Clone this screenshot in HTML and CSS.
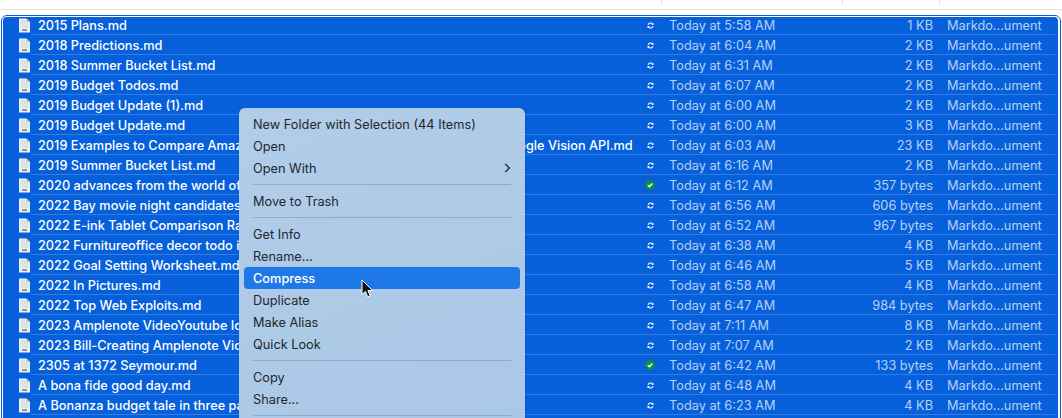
FILE: index.html
```html
<!DOCTYPE html>
<html lang="en">
<head>
    <meta charset="UTF-8">
    <meta name="viewport" content="width=device-width, initial-scale=1.0">
    <title>Finder selection</title>
    <link rel="stylesheet" href="styles.css">
</head>
<body>
    <svg class="defs" width="0" height="0">
        <symbol id="doc" viewBox="0 0 11 15">
            <path d="M0 0.5H7.4L11 4.1V14.5H0Z" fill="#eef0f2"/>
            <path d="M7.4 0.5L11 4.1H7.4Z" fill="#bfc3c9"/>
            <path d="M1.6 3H6M1.6 5H9.4M1.6 7H9.4M1.6 9H9.4" stroke="#cdd0d5" stroke-width="0.9"/>
            <rect x="3" y="11.2" width="5" height="1.8" fill="#868b93"/>
        </symbol>
        <symbol id="sync" viewBox="0 0 8 8">
            <path d="M1.2 3.4A2.9 2.9 0 0 1 6.4 2.4M6.8 4.6A2.9 2.9 0 0 1 1.6 5.6" fill="none" stroke="#fff" stroke-width="1.3"/>
            <path d="M7.4 0.9V3.4H4.9ZM0.6 7.1V4.6H3.1Z" fill="#fff"/>
        </symbol>
        <symbol id="done" viewBox="0 0 11 11">
            <circle cx="5.5" cy="5.5" r="5.5" fill="#0e8a4b"/>
            <path d="M3 5.8L4.8 7.4L8 3.9" fill="none" stroke="#fff" stroke-width="1.5"/>
        </symbol>
    </svg>

    <div class="header">
        <span class="tick tick-date"></span>
        <span class="tick tick-size"></span>
        <span class="tick tick-kind"></span>
    </div>

    <div class="frame">
        <div class="list">
            <div class="row"><svg class="doc"><use href="#doc"/></svg><span class="name">2015 Plans.md</span><svg class="sync"><use href="#sync"/></svg><span class="date">Today at 5:58 AM</span><span class="size">1 KB</span><span class="kind">Markdo...ument</span></div>
            <div class="row"><svg class="doc"><use href="#doc"/></svg><span class="name">2018 Predictions.md</span><svg class="sync"><use href="#sync"/></svg><span class="date">Today at 6:04 AM</span><span class="size">2 KB</span><span class="kind">Markdo...ument</span></div>
            <div class="row"><svg class="doc"><use href="#doc"/></svg><span class="name">2018 Summer Bucket List.md</span><svg class="sync"><use href="#sync"/></svg><span class="date">Today at 6:31 AM</span><span class="size">2 KB</span><span class="kind">Markdo...ument</span></div>
            <div class="row"><svg class="doc"><use href="#doc"/></svg><span class="name">2019 Budget Todos.md</span><svg class="sync"><use href="#sync"/></svg><span class="date">Today at 6:07 AM</span><span class="size">2 KB</span><span class="kind">Markdo...ument</span></div>
            <div class="row"><svg class="doc"><use href="#doc"/></svg><span class="name">2019 Budget Update (1).md</span><svg class="sync"><use href="#sync"/></svg><span class="date">Today at 6:00 AM</span><span class="size">2 KB</span><span class="kind">Markdo...ument</span></div>
            <div class="row"><svg class="doc"><use href="#doc"/></svg><span class="name">2019 Budget Update.md</span><svg class="sync"><use href="#sync"/></svg><span class="date">Today at 6:00 AM</span><span class="size">3 KB</span><span class="kind">Markdo...ument</span></div>
            <div class="row"><svg class="doc"><use href="#doc"/></svg><span class="name">2019 Examples to Compare Amazon Rekognition, Microsoft Azure, Bing and Google Vision API.md</span><svg class="sync"><use href="#sync"/></svg><span class="date">Today at 6:03 AM</span><span class="size">23 KB</span><span class="kind">Markdo...ument</span></div>
            <div class="row"><svg class="doc"><use href="#doc"/></svg><span class="name">2019 Summer Bucket List.md</span><svg class="sync"><use href="#sync"/></svg><span class="date">Today at 6:16 AM</span><span class="size">2 KB</span><span class="kind">Markdo...ument</span></div>
            <div class="row"><svg class="doc"><use href="#doc"/></svg><span class="name">2020 advances from the world of technology.md</span><svg class="done"><use href="#done"/></svg><span class="date">Today at 6:12 AM</span><span class="size">357 bytes</span><span class="kind">Markdo...ument</span></div>
            <div class="row"><svg class="doc"><use href="#doc"/></svg><span class="name">2022 Bay movie night candidates list.md</span><svg class="sync"><use href="#sync"/></svg><span class="date">Today at 6:56 AM</span><span class="size">606 bytes</span><span class="kind">Markdo...ument</span></div>
            <div class="row"><svg class="doc"><use href="#doc"/></svg><span class="name">2022 E-ink Tablet Comparison Ratings.md</span><svg class="sync"><use href="#sync"/></svg><span class="date">Today at 6:52 AM</span><span class="size">967 bytes</span><span class="kind">Markdo...ument</span></div>
            <div class="row"><svg class="doc"><use href="#doc"/></svg><span class="name">2022 Furnitureoffice decor todo ideas.md</span><svg class="sync"><use href="#sync"/></svg><span class="date">Today at 6:38 AM</span><span class="size">4 KB</span><span class="kind">Markdo...ument</span></div>
            <div class="row"><svg class="doc"><use href="#doc"/></svg><span class="name">2022 Goal Setting Worksheet.md</span><svg class="sync"><use href="#sync"/></svg><span class="date">Today at 6:46 AM</span><span class="size">5 KB</span><span class="kind">Markdo...ument</span></div>
            <div class="row"><svg class="doc"><use href="#doc"/></svg><span class="name">2022 In Pictures.md</span><svg class="sync"><use href="#sync"/></svg><span class="date">Today at 6:58 AM</span><span class="size">4 KB</span><span class="kind">Markdo...ument</span></div>
            <div class="row"><svg class="doc"><use href="#doc"/></svg><span class="name">2022 Top Web Exploits.md</span><svg class="sync"><use href="#sync"/></svg><span class="date">Today at 6:47 AM</span><span class="size">984 bytes</span><span class="kind">Markdo...ument</span></div>
            <div class="row"><svg class="doc"><use href="#doc"/></svg><span class="name">2023 Amplenote VideoYoutube Ideas list.md</span><svg class="sync"><use href="#sync"/></svg><span class="date">Today at 7:11 AM</span><span class="size">8 KB</span><span class="kind">Markdo...ument</span></div>
            <div class="row"><svg class="doc"><use href="#doc"/></svg><span class="name">2023 Bill-Creating Amplenote Videos plan.md</span><svg class="sync"><use href="#sync"/></svg><span class="date">Today at 7:07 AM</span><span class="size">2 KB</span><span class="kind">Markdo...ument</span></div>
            <div class="row"><svg class="doc"><use href="#doc"/></svg><span class="name">2305 at 1372 Seymour.md</span><svg class="done"><use href="#done"/></svg><span class="date">Today at 6:42 AM</span><span class="size">133 bytes</span><span class="kind">Markdo...ument</span></div>
            <div class="row"><svg class="doc"><use href="#doc"/></svg><span class="name">A bona fide good day.md</span><svg class="sync"><use href="#sync"/></svg><span class="date">Today at 6:48 AM</span><span class="size">4 KB</span><span class="kind">Markdo...ument</span></div>
            <div class="row"><svg class="doc"><use href="#doc"/></svg><span class="name">A Bonanza budget tale in three parts.md</span><svg class="sync"><use href="#sync"/></svg><span class="date">Today at 6:23 AM</span><span class="size">4 KB</span><span class="kind">Markdo...ument</span></div>
        </div>
    </div>

    <div class="menu">
        <div class="menu-item">New Folder with Selection (44 Items)</div>
        <div class="menu-item">Open</div>
        <div class="menu-item">Open With
            <svg class="chevron" viewBox="0 0 7 10"><path d="M1.2 1L5.4 5L1.2 9" fill="none" stroke="#2b3238" stroke-width="1.5"/></svg>
        </div>
        <div class="menu-sep"></div>
        <div class="menu-item">Move to Trash</div>
        <div class="menu-sep"></div>
        <div class="menu-item">Get Info</div>
        <div class="menu-item">Rename...</div>
        <div class="menu-item active">Compress</div>
        <div class="menu-item">Duplicate</div>
        <div class="menu-item">Make Alias</div>
        <div class="menu-item">Quick Look</div>
        <div class="menu-sep"></div>
        <div class="menu-item">Copy</div>
        <div class="menu-item">Share...</div>
        <div class="menu-sep"></div>
    </div>

    <svg class="cursor" viewBox="0 0 13 19">
        <path d="M1 1V15.5L4.4 12.4L6.7 17.8L9.2 16.7L6.9 11.5H11.5Z" fill="#111" stroke="#fff" stroke-width="1"/>
    </svg>
</body>
</html>
```

FILE: styles.css
```css
html, body {
    margin: 0;
    height: 418px;
    overflow: hidden;
    background: #fff;
}
body {
    font-family: Inter, "Liberation Sans", sans-serif;
    font-size: 12.75px;
    position: relative;
}
.defs {
    position: absolute;
}
.header {
    display: flex;
    height: 9px;
    border-bottom: 1px solid #e3e3e3;
    margin-bottom: 5px;
}
.tick {
    width: 1px;
    height: 5px;
    background: #e6e6e6;
}
.tick-date {
    margin-left: 661px;
}
.tick-size {
    margin-left: 180px;
}
.tick-kind {
    margin-left: 96px;
}
.frame {
    margin: 0 1px;
    height: 420px;
    padding: 1px 2px 0 1px;
    border: 1px solid #0a5fdc;
    border-radius: 6px 6px 0 0;
    background: #fff;
}
.list {
    height: 100%;
    overflow: hidden;
    background: #0660dc;
    border-radius: 4px 4px 0 0;
}
.row {
    display: flex;
    align-items: center;
    height: 20px;
    box-sizing: border-box;
    position: relative;
    color: #b9d0f4;
}
.row:first-child {
    margin-top: -2px;
}
.row::after {
    content: "";
    position: absolute;
    left: 28px;
    right: 3px;
    bottom: 0;
    height: 1px;
    background: rgba(255, 255, 255, 0.18);
}
.doc {
    width: 11px;
    height: 15px;
    margin-left: 16px;
    flex: none;
}
.name {
    width: 606px;
    margin-left: 8px;
    color: #fff;
    font-weight: 500;
    white-space: nowrap;
    flex: none;
}
.sync {
    width: 7px;
    height: 7px;
    margin-left: 3px;
    flex: none;
    overflow: visible;
}
.done {
    width: 10px;
    height: 10px;
    margin: 0 -1px 0 1px;
    flex: none;
}
.date {
    width: 150px;
    margin-left: 15px;
    flex: none;
}
.size {
    width: 114px;
    text-align: right;
    flex: none;
}
.kind {
    margin-left: 14px;
    white-space: nowrap;
}
.menu {
    position: absolute;
    left: 239px;
    top: 108px;
    width: 286px;
    height: 330px;
    box-sizing: border-box;
    padding: 5px;
    border-radius: 6px;
    background: linear-gradient(160deg, #b2cde8, #a9c7e6);
    box-shadow: 0 0 1px rgba(0, 0, 0, 0.35);
    color: #22282e;
}
.menu-item {
    display: flex;
    align-items: center;
    justify-content: space-between;
    height: 22px;
    padding: 0 9px;
    border-radius: 4px;
}
.menu-item.active {
    background: #1f78e8;
    color: #fff;
    font-weight: 500;
}
.menu-sep {
    height: 1px;
    margin: 5px 9px;
    background: #8fabc9;
}
.chevron {
    width: 7px;
    height: 10px;
}
.cursor {
    position: absolute;
    left: 361px;
    top: 279px;
    width: 13px;
    height: 19px;
}
```
